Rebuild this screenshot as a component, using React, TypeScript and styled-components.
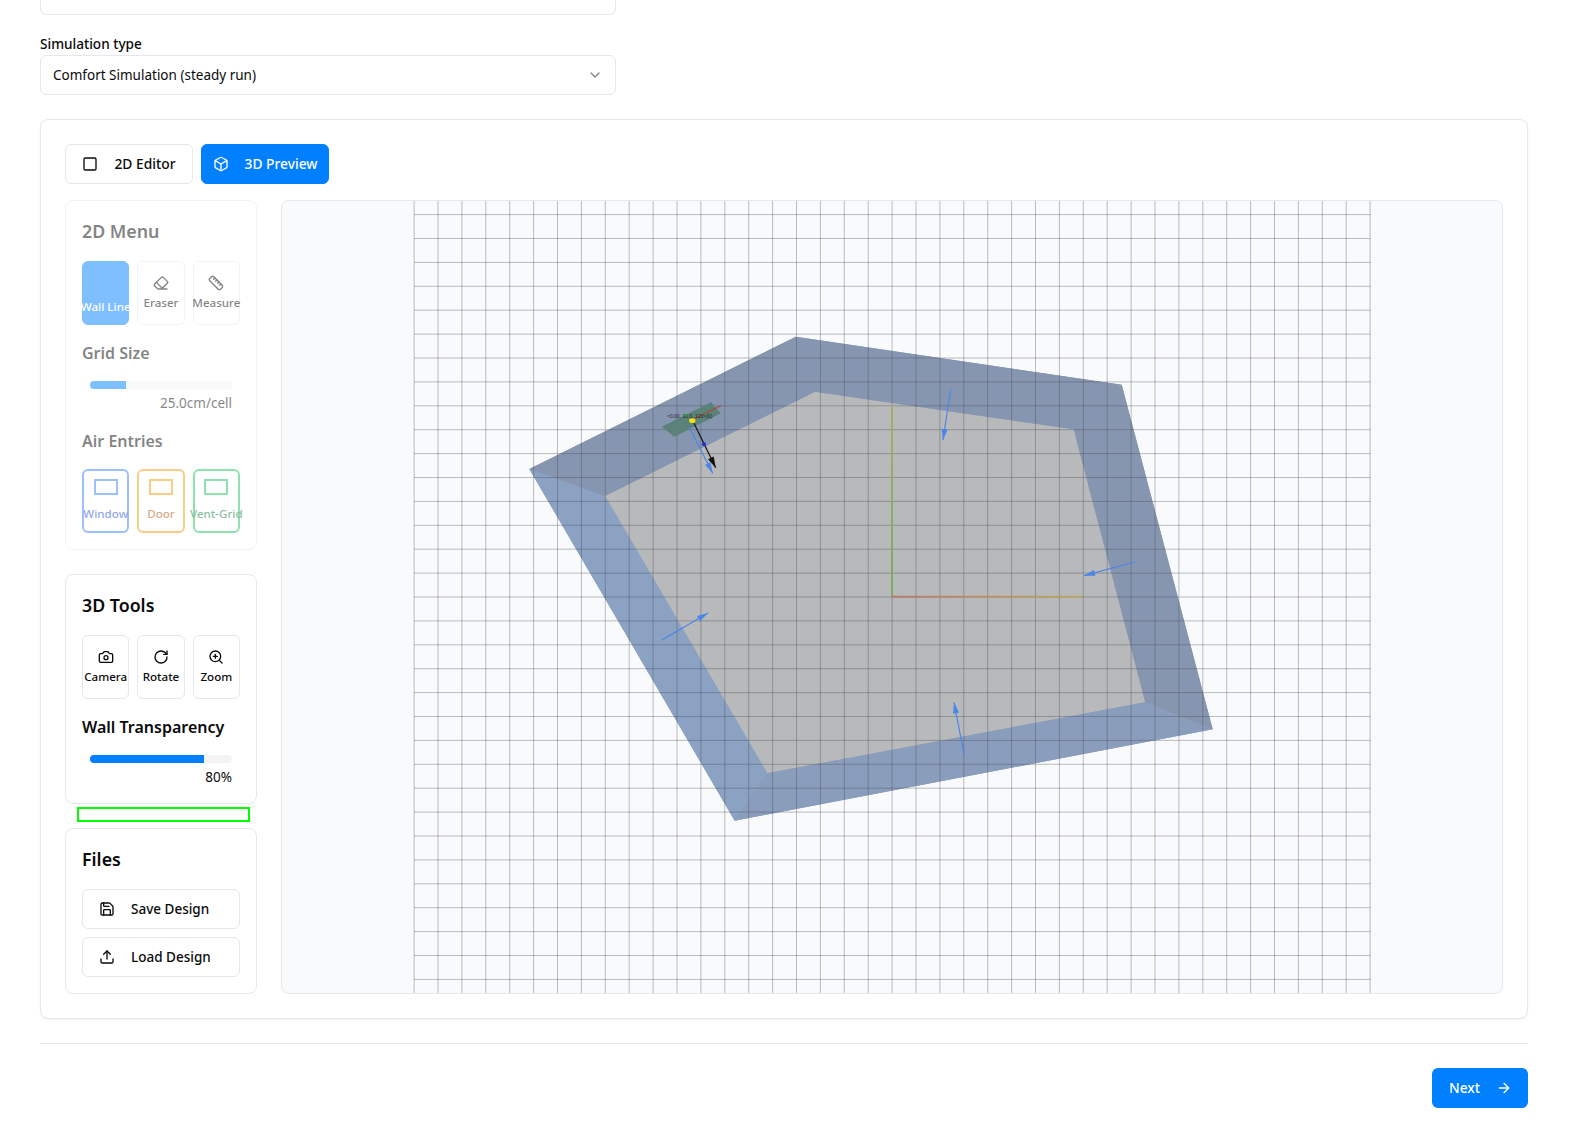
import { createGlobalStyle, styled } from "styled-components";
import {
  ArrowRight,
  Box,
  Camera,
  ChevronDown,
  Eraser,
  RotateCw,
  Ruler,
  Save,
  Square,
  Upload,
  ZoomIn,
} from "lucide-react";

const GlobalStyle = createGlobalStyle`
  * { box-sizing: border-box; }
  html, body { margin: 0; padding: 0; background: #fff; }
  body {
    font-family: "Noto Sans", "Open Sans", sans-serif;
    color: #0a0a0a;
    overflow: hidden;
  }
`;

const range = (n: number) => Array.from({ length: n }, (_, i) => i);

const ARROWS = [
  [950.7, 389, 943, 440],
  [1135, 562, 1084, 575.7],
  [662, 640, 708, 613],
  [964, 754, 954, 702.3],
  [689.3, 427.3, 712.7, 473.3],
];

const arrowHead = (x1: number, y1: number, x2: number, y2: number, len = 11, w = 3) => {
  const d = Math.hypot(x2 - x1, y2 - y1);
  const ux = (x2 - x1) / d;
  const uy = (y2 - y1) / d;
  const bx = x2 - ux * len;
  const by = y2 - uy * len;
  return `${x2},${y2} ${bx - uy * w},${by + ux * w} ${bx + uy * w},${by - ux * w}`;
};

const ScenePreview = () => (
  <Scene viewBox="282 201 1220 792">
    <defs>
      <linearGradient id="axisX" x1="0" x2="1" y1="0" y2="0">
        <stop offset="0" stopColor="#b9796c" />
        <stop offset="1" stopColor="#b9a860" />
      </linearGradient>
      <linearGradient id="axisY" x1="0" x2="0" y1="0" y2="1">
        <stop offset="0" stopColor="#a6ad5f" />
        <stop offset="1" stopColor="#6fae5f" />
      </linearGradient>
    </defs>

    {/* outer shape first so the wall joins leave no hairline */}
    <polygon points="529.3,469 795.7,336.7 1121.7,384.7 1212.7,729.3 734.7,820.7" fill="#8a9bb9" />
    <polygon points="605,496 815,391.7 1073.7,429.3 1145.3,702.3 767.3,773.3" fill="#b8b9bb" />
    <polygon points="529.3,469 605,496 767.3,773.3 734.7,820.7" fill="#8ca2c3" />
    <polygon points="734.7,820.7 767.3,773.3 1145.3,702.3 1212.7,729.3" fill="#8b9dbc" />
    <polygon
      points="529.3,469 795.7,336.7 1121.7,384.7 1212.7,729.3 1145.3,702.3 1073.7,429.3 815,391.7 605,496"
      fill="#8796b0"
    />

    {range(41).map((i) => (
      <GridLine key={`v${i}`} x1={414.1 + i * 23.9} x2={414.1 + i * 23.9} y1={201} y2={993} />
    ))}
    {range(33).map((i) => (
      <GridLine key={`h${i}`} x1={414} x2={1370.5} y1={214.6 + i * 23.9} y2={214.6 + i * 23.9} />
    ))}

    <rect x="891.2" y="405" width="1.8" height="191.7" fill="url(#axisY)" />
    <rect x="892" y="595.8" width="191" height="1.8" fill="url(#axisX)" />

    <polygon points="661.7,426.7 711,402.3 720.7,413.3 674.3,436.7" fill="#5a8278" />
    <line x1={691.7} y1={420} x2={721} y2={405.7} stroke="#c0392b" strokeWidth={1} />
    {ARROWS.map(([x1, y1, x2, y2]) => (
      <g key={`${x1}-${y1}`}>
        <line x1={x1} y1={y1} x2={x2} y2={y2} stroke="#4a86e8" strokeWidth={1.2} />
        <polygon points={arrowHead(x1, y1, x2, y2)} fill="#4a86e8" />
      </g>
    ))}
    <line x1={694} y1={423.3} x2={715.7} y2={467.7} stroke="#111" strokeWidth={1.2} />
    <polygon points={arrowHead(694, 423.3, 715.7, 467.7, 11, 3.2)} fill="#111" />
    <circle cx={704} cy={444.3} r={2} fill="#2030d0" />
    <circle cx={686.7} cy={415} r={1.5} fill="#2ecc40" />
    <ellipse cx={692.3} cy={420.7} rx={3.2} ry={2.4} fill="#f2e21b" />
    <SceneLabel x={667} y={417.5}>
      &lt;0.00, 10.0, 120&gt;(0)
    </SceneLabel>
  </Scene>
);

const SLIDER_GRID = 25;
const SLIDER_WALL = 80;

export default function App() {
  return (
    <Page>
      <GlobalStyle />
      <FieldStub />
      <FieldLabel>Simulation type</FieldLabel>
      <Select>
        <span>Comfort Simulation (steady run)</span>
        <ChevronDown size={16} />
      </Select>

      <MainCard>
        <Tabs>
          <TabButton>
            <Square size={16} />
            2D Editor
          </TabButton>
          <TabButton $active>
            <Box size={16} />
            3D Preview
          </TabButton>
        </Tabs>
        <Workspace>
          <Sidebar>
            <ToolCard $dimmed>
              <ToolTitle>2D Menu</ToolTitle>
              <ToolGrid>
                <ToolButton $selected>
                  <BlankIcon />
                  Wall Line
                </ToolButton>
                <ToolButton>
                  <Eraser size={16} />
                  Eraser
                </ToolButton>
                <ToolButton>
                  <Ruler size={16} />
                  Measure
                </ToolButton>
              </ToolGrid>
              <SectionTitle>Grid Size</SectionTitle>
              <SliderTrack>
                <SliderFill $width={SLIDER_GRID} />
              </SliderTrack>
              <SliderValue>25.0cm/cell</SliderValue>
              <SectionTitle>Air Entries</SectionTitle>
              <ToolGrid>
                <EntryButton $border="#3b82f6" $text="#1d4ed8">
                  <EntryIcon $border="#3b82f6" />
                  Window
                </EntryButton>
                <EntryButton $border="#f59e0b" $text="#b45309">
                  <EntryIcon $border="#f59e0b" />
                  Door
                </EntryButton>
                <EntryButton $border="#22c55e" $text="#15803d">
                  <EntryIcon $border="#22c55e" />
                  Vent-Grid
                </EntryButton>
              </ToolGrid>
            </ToolCard>

            <ToolCard>
              <ToolTitle>3D Tools</ToolTitle>
              <ToolGrid>
                <ToolButton>
                  <Camera size={16} />
                  Camera
                </ToolButton>
                <ToolButton>
                  <RotateCw size={16} />
                  Rotate
                </ToolButton>
                <ToolButton>
                  <ZoomIn size={16} />
                  Zoom
                </ToolButton>
              </ToolGrid>
              <SectionTitle>Wall Transparency</SectionTitle>
              <SliderTrack>
                <SliderFill $width={SLIDER_WALL} />
              </SliderTrack>
              <SliderValue>80%</SliderValue>
              <GreenMarker />
            </ToolCard>

            <ToolCard>
              <ToolTitle>Files</ToolTitle>
              <FileActions>
                <FileButton>
                  <Save size={16} />
                  Save Design
                </FileButton>
                <FileButton>
                  <Upload size={16} />
                  Load Design
                </FileButton>
              </FileActions>
            </ToolCard>
          </Sidebar>
          <CanvasPanel>
            <ScenePreview />
          </CanvasPanel>
        </Workspace>
      </MainCard>

      <Divider />
      <Footer>
        <NextButton>
          Next
          <ArrowRight size={16} />
        </NextButton>
      </Footer>
    </Page>
  );
}

const Page = styled.div`
  height: 100vh;
  overflow: hidden;
  padding: 0 48px 0 40px;
  display: flex;
  flex-direction: column;
`;

const FieldStub = styled.div`
  width: 576px;
  height: 15px;
  flex-shrink: 0;
  border: 1px solid #e5e7eb;
  border-top: none;
  border-radius: 0 0 6px 6px;
  margin-bottom: 19px;
`;

const FieldLabel = styled.label`
  font-size: 13.6px;
  line-height: 20px;
  font-weight: 500;
  margin-bottom: 1px;
`;

const Select = styled.div`
  width: 576px;
  height: 40px;
  flex-shrink: 0;
  border: 1px solid #e5e7eb;
  border-radius: 6px;
  padding: 0 12px;
  display: flex;
  align-items: center;
  justify-content: space-between;
  font-size: 13.5px;
  margin-bottom: 24px;

  svg {
    opacity: 0.5;
  }
`;

const MainCard = styled.section`
  flex-shrink: 0;
  border: 1px solid #e5e7eb;
  border-radius: 8px;
  padding: 24px;
  box-shadow: 0 1px 2px rgba(0, 0, 0, 0.05);
`;

const Tabs = styled.div`
  display: flex;
  gap: 8px;
  margin-bottom: 16px;
`;

const TabButton = styled.button<{ $active?: boolean }>`
  width: 128px;
  height: 40px;
  display: flex;
  align-items: center;
  justify-content: center;
  gap: 16px;
  padding: 0;
  font-family: inherit;
  font-size: 13.8px;
  line-height: 20px;
  font-weight: 500;
  border-radius: 6px;
  border: 1px solid ${(p) => (p.$active ? "#0080ff" : "#e5e7eb")};
  background: ${(p) => (p.$active ? "#0080ff" : "#fff")};
  color: ${(p) => (p.$active ? "#fff" : "#0a0a0a")};
`;

const Workspace = styled.div`
  display: flex;
  gap: 24px;
`;

const Sidebar = styled.aside`
  width: 192px;
  flex-shrink: 0;
  display: flex;
  flex-direction: column;
  gap: 24px;
`;

const ToolCard = styled.div<{ $dimmed?: boolean }>`
  position: relative;
  border: 1px solid #e5e7eb;
  border-radius: 8px;
  padding: 16px;
  opacity: ${(p) => (p.$dimmed ? 0.5 : 1)};
`;

const ToolTitle = styled.h3`
  margin: 0 0 16px;
  font-size: 17.8px;
  line-height: 28px;
  font-weight: 600;
`;

const SectionTitle = styled.h3`
  margin: 14px 0;
  font-size: 16px;
  line-height: 28px;
  font-weight: 600;
`;

const ToolGrid = styled.div`
  display: grid;
  grid-template-columns: repeat(3, 1fr);
  gap: 8px;
`;

const ToolButton = styled.button<{ $selected?: boolean }>`
  height: 64px;
  padding: 0;
  min-width: 0;
  display: flex;
  flex-direction: column;
  align-items: center;
  justify-content: center;
  gap: 4px;
  white-space: nowrap;
  font-family: inherit;
  font-size: 11.6px;
  line-height: 16px;
  font-weight: 500;
  border-radius: 6px;
  border: 1px solid ${(p) => (p.$selected ? "#0080ff" : "#e5e7eb")};
  background: ${(p) => (p.$selected ? "#0080ff" : "#fff")};
  color: ${(p) => (p.$selected ? "#fff" : "#0a0a0a")};
`;

const BlankIcon = styled.span`
  width: 24px;
  height: 24px;
`;

const EntryButton = styled.button<{ $border: string; $text: string }>`
  height: 64px;
  padding: 0 0 1px;
  min-width: 0;
  display: flex;
  flex-direction: column;
  align-items: center;
  justify-content: center;
  gap: 11px;
  white-space: nowrap;
  font-family: inherit;
  font-size: 11.6px;
  line-height: 16px;
  font-weight: 500;
  border-radius: 6px;
  background: #fff;
  border: 2px solid ${(p) => p.$border};
  color: ${(p) => p.$text};
`;

const EntryIcon = styled.span<{ $border: string }>`
  width: 24px;
  height: 16px;
  border: 2px solid ${(p) => p.$border};
`;

const SliderTrack = styled.div`
  height: 8px;
  margin: 0 8px;
  border-radius: 4px;
  background: #f3f4f6;
  overflow: hidden;
`;

const SliderFill = styled.div<{ $width: number }>`
  height: 100%;
  width: ${(p) => p.$width}%;
  background: #0080ff;
`;

const SliderValue = styled.div`
  margin: 4px 8px 0 0;
  text-align: right;
  font-size: 13.5px;
  line-height: 20px;
`;

const GreenMarker = styled.div`
  position: absolute;
  top: calc(100% + 4px);
  left: 11px;
  width: 173px;
  height: 15px;
  border: 2px solid #00ff00;
`;

const FileActions = styled.div`
  display: flex;
  flex-direction: column;
  gap: 8px;
`;

const FileButton = styled.button`
  height: 40px;
  display: flex;
  align-items: center;
  gap: 16px;
  padding: 0 16px;
  font-family: inherit;
  font-size: 13.5px;
  font-weight: 500;
  color: #0a0a0a;
  background: #fff;
  border: 1px solid #e5e7eb;
  border-radius: 6px;
`;

const CanvasPanel = styled.div`
  flex: 1;
  min-width: 0;
  border: 1px solid #e5e7eb;
  border-radius: 8px;
  background: #f9fafb;
  overflow: hidden;
`;

const Scene = styled.svg`
  display: block;
  width: 100%;
  height: 100%;
`;

const GridLine = styled.line`
  stroke: rgba(60, 60, 70, 0.33);
  stroke-width: 1;
`;

const SceneLabel = styled.text`
  font-family: "Liberation Sans", sans-serif;
  font-size: 5px;
  fill: #222;
`;

const Divider = styled.hr`
  width: 100%;
  margin: 24px 0;
  border: none;
  border-top: 1px solid #e5e7eb;
  flex-shrink: 0;
`;

const Footer = styled.div`
  display: flex;
  justify-content: flex-end;
`;

const NextButton = styled.button`
  width: 96px;
  height: 40px;
  display: flex;
  align-items: center;
  justify-content: center;
  gap: 16px;
  padding: 0 0 0 1px;
  font-family: inherit;
  font-size: 13.8px;
  line-height: 20px;
  font-weight: 500;
  color: #fff;
  background: #0080ff;
  border: none;
  border-radius: 6px;
`;
